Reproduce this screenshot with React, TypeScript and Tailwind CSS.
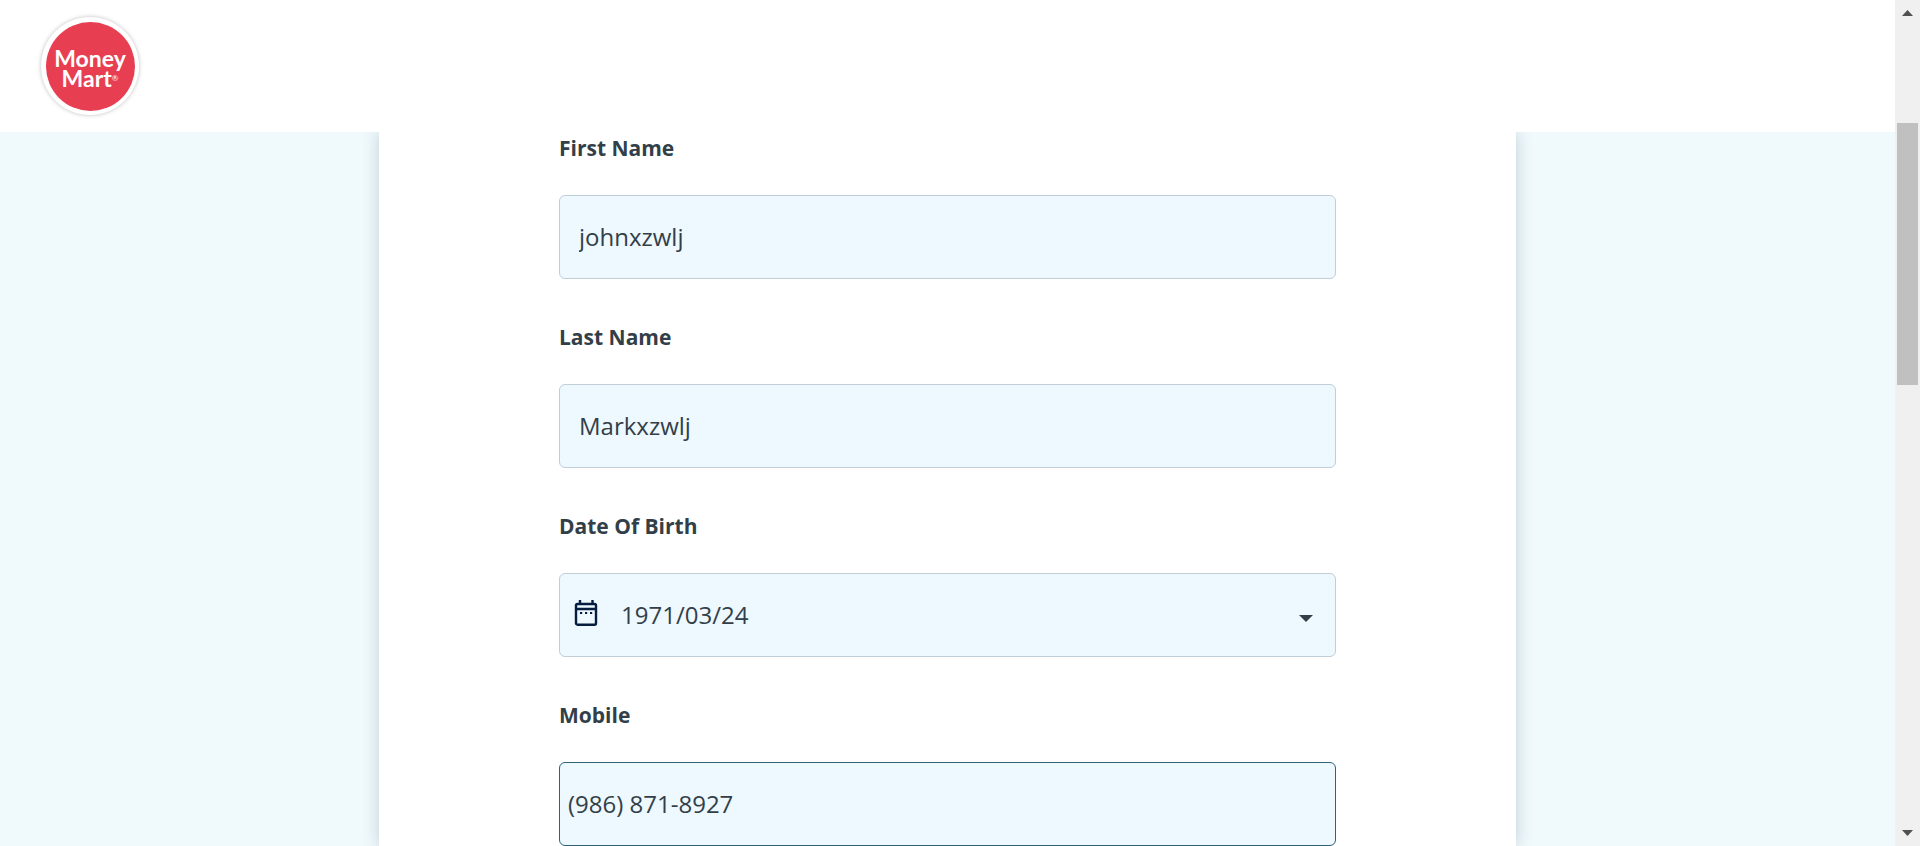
import type { ReactNode } from "react";

const inputText =
  "min-w-0 flex-1 self-stretch bg-transparent text-2xl font-normal text-[#333f48] outline-none";

function Field({
  id,
  label,
  active = false,
  children,
}: {
  id: string;
  label: string;
  active?: boolean;
  children: ReactNode;
}) {
  return (
    <div className="flex flex-col gap-[30px]">
      <label htmlFor={id} className="text-[21px] leading-[33px] font-bold text-[#333f48]">
        {label}
      </label>
      <div
        className={
          active
            ? "flex h-[84px] items-center rounded-md border border-[#2f6478] bg-[#edf8ff]"
            : "flex h-[84px] items-center rounded-md border border-[#c0ced9] bg-[#edf8ff]"
        }
      >
        {children}
      </div>
    </div>
  );
}

function CalendarIcon() {
  return (
    <svg width="24" height="26" viewBox="0 0 24 26" fill="none" aria-hidden="true">
      <rect x="2" y="4" width="20" height="20.7" rx="1.5" stroke="#061d40" strokeWidth="2.4" />
      <path d="M2 9H22M6 0V4M18.5 0V4" stroke="#061d40" strokeWidth="2.4" />
      <path d="M6 13H8.2M11 13H13.2M16 13H18.2" stroke="#061d40" strokeWidth="2.2" />
    </svg>
  );
}

function Logo() {
  return (
    <a
      href="#"
      aria-label="Money Mart"
      className="flex size-[98px] items-center justify-center rounded-full bg-white shadow-[0_0_4px_rgba(0,0,0,0.25)]"
    >
      <span className="flex size-[89px] flex-col items-center justify-center rounded-full bg-[#e83e52] pt-[3px] font-['Lato'] text-[23px] leading-5 font-bold text-white">
        <span>Money</span>
        <span className="flex">
          Mart<span className="text-[8px] leading-5 font-normal">®</span>
        </span>
      </span>
    </a>
  );
}

function Scrollbar() {
  return (
    <div
      aria-hidden="true"
      className="sticky top-0 flex h-screen w-[25px] shrink-0 flex-col items-center bg-[#f0f0f0] py-[10px]"
    >
      <svg width="11" height="6" viewBox="0 0 11 6" fill="#505050">
        <path d="M5.5 0L11 6H0Z" />
      </svg>
      <div className="flex w-full flex-1 flex-col items-center pt-[107px]">
        <div className="h-[262px] w-[21px] bg-[#c0c0c0]" />
      </div>
      <svg width="11" height="6" viewBox="0 0 11 6" fill="#505050">
        <path d="M0 0H11L5.5 6Z" />
      </svg>
    </div>
  );
}

export default function App() {
  return (
    <div className="flex min-h-screen font-['Open_Sans',sans-serif]">
      <div className="flex min-w-0 flex-1 flex-col bg-[#f0f9fc]">
        <header className="z-10 flex h-[132px] items-center bg-white px-[41px]">
          <Logo />
        </header>
        <main className="flex flex-1 flex-col overflow-hidden">
          <form className="mx-auto flex w-3/5 flex-1 flex-col gap-[42px] bg-white px-[180px] shadow-[0_0_15px_rgba(50,90,110,0.25)]">
            <Field id="first-name" label="First Name">
              <input id="first-name" type="text" defaultValue="johnxzwlj" className={`${inputText} px-[19px]`} />
            </Field>
            <Field id="last-name" label="Last Name">
              <input id="last-name" type="text" defaultValue="Markxzwlj" className={`${inputText} px-[19px]`} />
            </Field>
            <Field id="birth-date" label="Date Of Birth">
              <span className="pb-1 pl-[14px]">
                <CalendarIcon />
              </span>
              <input id="birth-date" type="text" defaultValue="1971/03/24" className={`${inputText} pl-[23px]`} />
              <button type="button" aria-label="Open calendar" className="px-[22px] pt-1.5">
                <svg width="14" height="7" viewBox="0 0 14 7" fill="#333f48" aria-hidden="true">
                  <path d="M0 0H14L7 7Z" />
                </svg>
              </button>
            </Field>
            <Field id="mobile" label="Mobile" active>
              <input id="mobile" type="tel" defaultValue="(986) 871-8927" className={`${inputText} px-2`} />
            </Field>
          </form>
        </main>
      </div>
      <Scrollbar />
    </div>
  );
}
